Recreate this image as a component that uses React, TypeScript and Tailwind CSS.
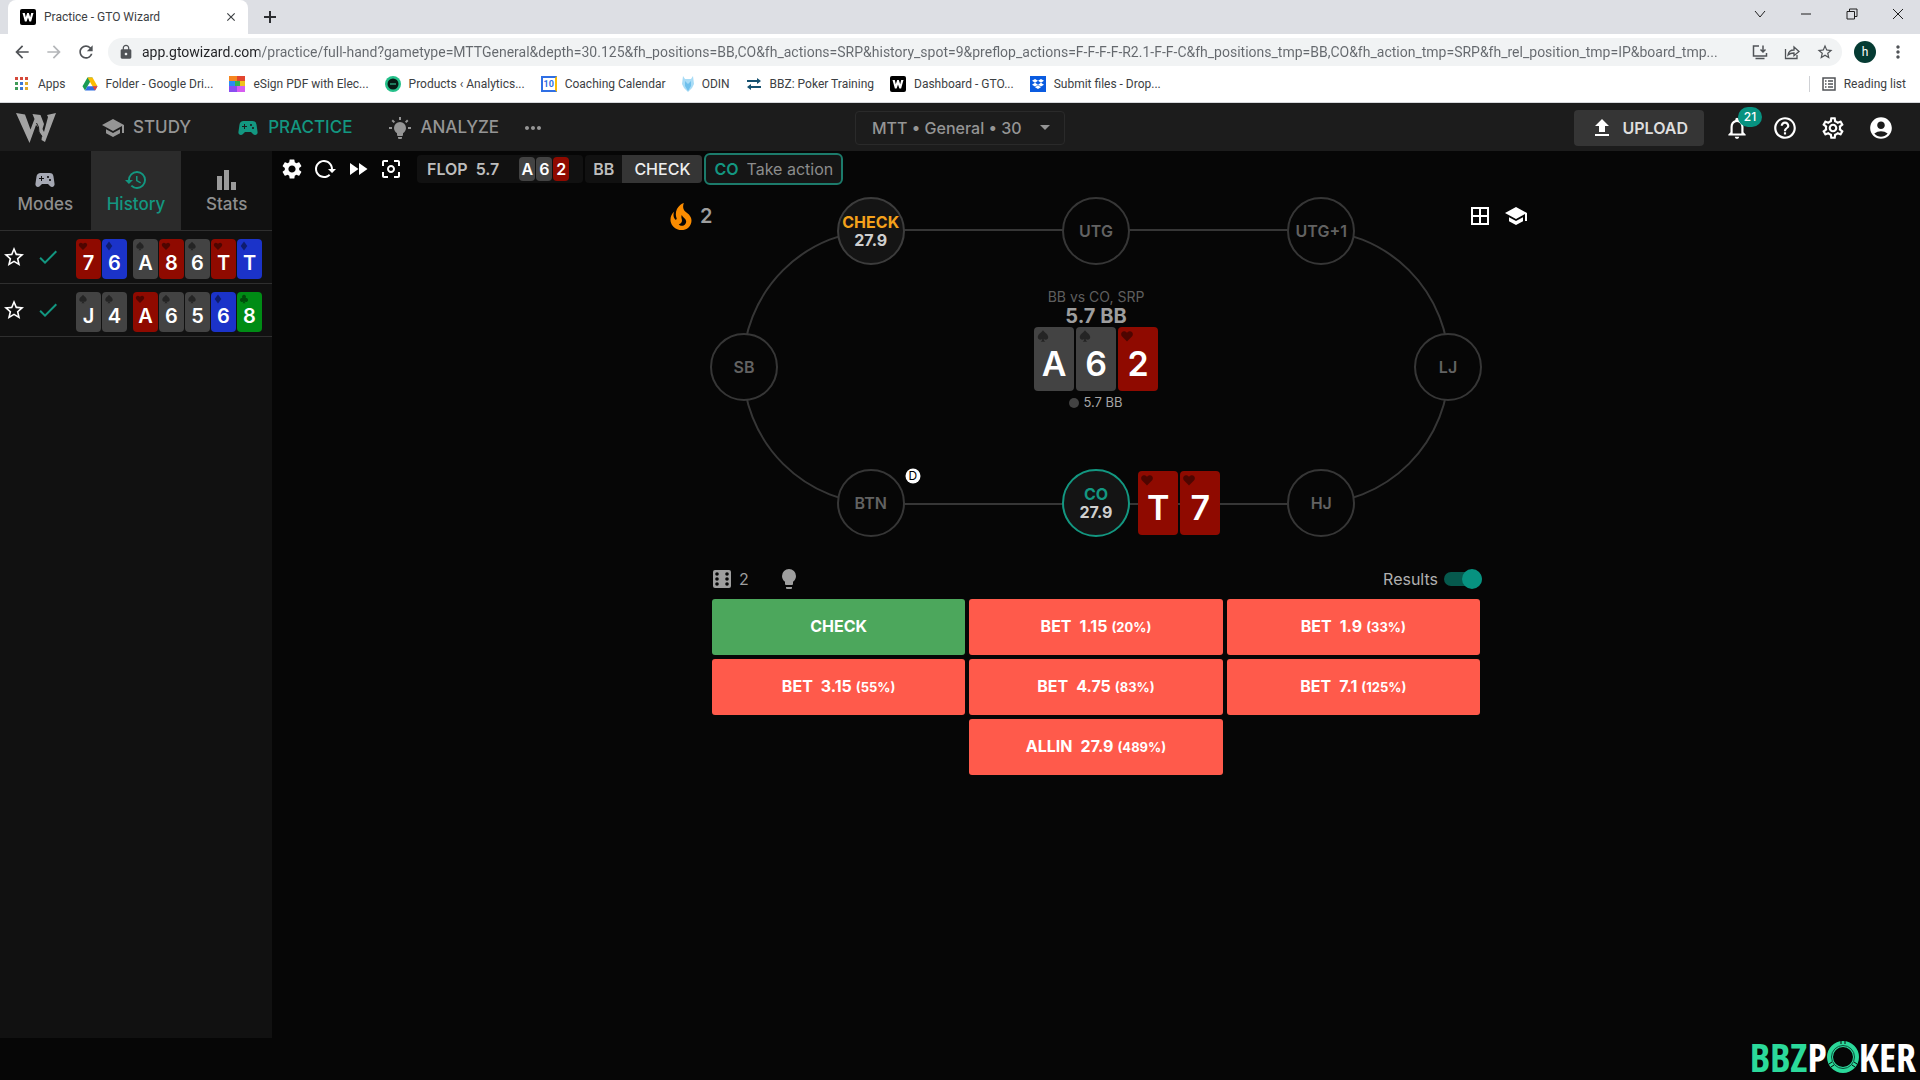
import type { ReactNode } from "react"
import {
  MdAccountCircle,
  MdArrowBack,
  MdArrowDropDown,
  MdArrowForward,
  MdBorderAll,
  MdCenterFocusWeak,
  MdCheck,
  MdClose,
  MdFastForward,
  MdHelpOutline,
  MdHistory,
  MdLock,
  MdMoreHoriz,
  MdMoreVert,
  MdNotificationsNone,
  MdOutlineSettings,
  MdRefresh,
  MdSchool,
  MdSettings,
  MdSportsEsports,
  MdStarBorder,
  MdUpload,
} from "react-icons/md"
import { FaDropbox } from "react-icons/fa"

type Suit = "s" | "h" | "d" | "c"

const suitColors: Record<Suit, string> = {
  s: "bg-[#434343]",
  h: "bg-[#8f0a00]",
  d: "bg-[#1b33c9]",
  c: "bg-[#008c15]",
}

const suitPaths: Record<Suit, string> = {
  s: "M12 2C9 6 3 9 3 14a4.5 4.5 0 0 0 7.6 3.2C10.400 19.500 9.500 21 8 22h8c-1.500-1-2.400-2.500-2.600-4.800A4.500 4.500 0 0 0 21 14c0-5-6-8-9-12z",
  h: "M12 21.500 3.500 13C-1 8 5 0 12 6.500 19 0 25 8 20.500 13z",
  d: "M12 1 20 12 12 23 4 12z",
  c: "M12 2a4.800 4.800 0 0 0-4 7.500 4.800 4.800 0 1 0 2.800 7.700C10.500 19.500 9.500 21 8 22h8c-1.500-1-2.500-2.500-2.800-4.800A4.800 4.800 0 1 0 16 9.500 4.800 4.800 0 0 0 12 2z",
}

const url =
  "app.gtowizard.com/practice/full-hand?gametype=MTTGeneral&depth=30.125&fh_positions=BB,CO&fh_actions=SRP&history_spot=9&preflop_actions=F-F-F-F-R2.1-F-F-C&fh_positions_tmp=BB,CO&fh_action_tmp=SRP&fh_rel_position_tmp=IP&board_tmp..."

const history = [
  { hand: ["7h", "6d"], board: ["As", "8h", "6s", "Th", "Td"] },
  { hand: ["Js", "4s"], board: ["Ah", "6s", "5s", "6d", "8c"] },
]

const seats = [
  { name: "BB", place: "left-[18%] top-0", action: "CHECK", stack: "27.9", ring: "border-[#3c3c3c]", label: "text-[#f5a21b]" },
  { name: "UTG", place: "left-1/2 top-0" },
  { name: "UTG+1", place: "left-[82%] top-0" },
  { name: "LJ", place: "left-full top-1/2" },
  { name: "HJ", place: "left-[82%] top-full" },
  { name: "CO", place: "left-1/2 top-full", action: "CO", stack: "27.9", ring: "border-[#139781]", label: "text-[#139781]" },
  { name: "BTN", place: "left-[18%] top-full" },
  { name: "SB", place: "left-0 top-1/2" },
]

const actions = [
  { label: "CHECK" },
  { label: "BET", size: "1.15", pct: "(20%)" },
  { label: "BET", size: "1.9", pct: "(33%)" },
  { label: "BET", size: "3.15", pct: "(55%)" },
  { label: "BET", size: "4.75", pct: "(83%)" },
  { label: "BET", size: "7.1", pct: "(125%)" },
  { label: "ALLIN", size: "27.9", pct: "(489%)" },
]

function PathIcon({ d, className, viewBox = "0 0 24 24" }: { d: string; className: string; viewBox?: string }) {
  return (
    <svg viewBox={viewBox} className={className} fill="currentColor" aria-hidden="true">
      <path d={d} />
    </svg>
  )
}

function WizardBadge() {
  return (
    <svg viewBox="0 0 16 16" className="size-4 shrink-0">
      <rect width="16" height="16" rx="2" fill="#000" />
      <path d="M2.500 4h2.300l1 4.200L7.200 4h1.600l1.400 4.200L11.200 4h2.300l-2.400 8.500H9.400L8 8.500l-1.400 4H4.900z" fill="#fff" />
    </svg>
  )
}

const bookmarks: { label: string; icon: ReactNode }[] = [
  {
    label: "Apps",
    icon: (
      <svg viewBox="0 0 16 16" className="size-4">
        {["#d5493a", "#d5493a", "#d5493a", "#3f9b57", "#3b78d8", "#e0a92c", "#3f9b57", "#3b78d8", "#e0a92c"].map((fill, i) => (
          <rect key={i} x={1 + (i % 3) * 5} y={1 + Math.floor(i / 3) * 5} width="3" height="3" fill={fill} />
        ))}
      </svg>
    ),
  },
  {
    label: "Folder - Google Dri...",
    icon: (
      <svg viewBox="0 0 16 16" className="size-4">
        <path d="M5.500 1.500h5L8 6 3 14.500.500 10.200z" fill="#1a9c55" />
        <path d="M5.500 1.500h5l5 8.700h-5z" fill="#fbbc04" />
        <path d="M5.500 10.200h10L13 14.500H3z" fill="#2f6fe4" />
        <path d="M10.500 10.200h5L13 14.500z" fill="#e94235" />
      </svg>
    ),
  },
  {
    label: "eSign PDF with Elec...",
    icon: (
      <svg viewBox="0 0 16 16" className="size-4">
        <rect width="8" height="6" fill="#f6861f" />
        <rect x="8" width="8" height="6" fill="#e2452f" />
        <rect y="5" width="6" height="5" fill="#2b8cf0" />
        <rect x="6" y="5" width="5" height="5" fill="#35b34a" />
        <rect x="11" y="5" width="5" height="5" fill="#f0c21b" />
        <rect y="10" width="8" height="6" fill="#8a4df0" />
        <rect x="8" y="10" width="8" height="6" fill="#d65cf0" />
      </svg>
    ),
  },
  {
    label: "Products ‹ Analytics...",
    icon: (
      <svg viewBox="0 0 16 16" className="size-4">
        <circle cx="8" cy="8" r="8" fill="#25c08a" />
        <circle cx="8" cy="8" r="5.500" fill="#071a14" />
        <rect x="5" y="7" width="6" height="2" fill="#1f7a5c" />
      </svg>
    ),
  },
  {
    label: "Coaching Calendar",
    icon: (
      <span className="flex size-4 items-center justify-center border-2 border-r-[#fbbc04] border-[#2f6fe4] bg-white text-[9px] font-bold text-[#2f6fe4]">
        10
      </span>
    ),
  },
  {
    label: "ODIN",
    icon: (
      <svg viewBox="0 0 12 16" className="h-4 w-3">
        <path d="M1 0l2 3h6l2-3 1 8-2 4-4 4-4-4-2-4z" fill="#a9dcf6" />
        <path d="M3 5l3 3 3-3v5l-3 5-3-5z" fill="#6fc0ec" />
      </svg>
    ),
  },
  {
    label: "BBZ: Poker Training",
    icon: (
      <svg viewBox="0 0 16 16" className="size-4" fill="#15506f">
        <path d="M1 4h10V2l4 3-4 3V6H1zM15 12H5v2l-4-3 4-3v2h10z" />
      </svg>
    ),
  },
  { label: "Dashboard - GTO...", icon: <WizardBadge /> },
  {
    label: "Submit files - Drop...",
    icon: (
      <span className="flex size-4 items-center justify-center bg-[#0a5be0] text-white">
        <FaDropbox className="size-3" />
      </span>
    ),
  },
]

function PlayingCard({ card, large = false }: { card: string; large?: boolean }) {
  const suit = card[1] as Suit
  return (
    <div
      className={`relative flex items-center justify-center font-semibold text-white ${suitColors[suit]} ${
        large ? "h-16 w-10 rounded-[4px] pt-2 text-[34px]" : "h-10 w-[25px] rounded-[4px] pt-2 text-xl"
      }`}
    >
      <PathIcon
        d={suitPaths[suit]}
        className={`absolute text-black/45 ${large ? "left-0.5 top-0.5 size-3.5" : "left-0.5 top-0.5 size-2.5"}`}
      />
      {card[0]}
    </div>
  )
}

function BrowserChrome() {
  return (
    <div className="bg-white font-['Roboto',sans-serif] text-xs text-[#3c4043]">
      <div className="flex h-[34px] items-center bg-[#dddfe4] pl-2 pr-4">
        <div className="flex h-[34px] w-60 items-center gap-2 rounded-t-lg bg-white pl-3 pr-2.5">
          <WizardBadge />
          <span className="flex-1">Practice - GTO Wizard</span>
          <button aria-label="Close tab">
            <MdClose className="size-3.5" />
          </button>
        </div>
        <button aria-label="New tab" className="ml-3.5">
          <svg viewBox="0 0 16 16" className="size-4" stroke="#2b2d30" strokeWidth="2">
            <path d="M8 2v12M2 8h12" />
          </svg>
        </button>
        <div className="ml-auto flex items-center gap-[34px] pb-1.5">
          {[
            ["Search tabs", "M1 3l5 6 5-6"],
            ["Minimize", "M1 6h10"],
            ["Restore", "M1 3.500h7.500V11H1zM3.500 3.500V1H11v7.500H8.500"],
            ["Close", "M1 1l10 10M11 1L1 11"],
          ].map(([label, d]) => (
            <button key={label} aria-label={label}>
              <svg viewBox="0 0 12 12" className="size-3" fill="none" stroke="#1f1f1f">
                <path d={d} />
              </svg>
            </button>
          ))}
        </div>
      </div>

      <div className="flex h-9 items-center pl-3 pr-3">
        <div className="flex items-center gap-3 text-[#505357]">
          <button aria-label="Back"><MdArrowBack className="size-5" /></button>
          <button aria-label="Forward" className="text-[#b4b6b9]"><MdArrowForward className="size-5" /></button>
          <button aria-label="Reload"><MdRefresh className="size-5" /></button>
        </div>
        <div className="ml-3 flex h-7 flex-1 items-center rounded-full bg-[#f1f3f4] pl-2.5 pr-2 text-[#505357]">
          <MdLock className="size-4" />
          <input
            aria-label="Address"
            readOnly
            value={url}
            className="ml-2 min-w-0 flex-1 bg-[linear-gradient(to_right,#202124_117px,#64686d_117px)] bg-clip-text text-sm text-transparent outline-none"
          />
          <div className="ml-3 flex items-center gap-4">
            <button aria-label="Install">
              <svg viewBox="0 0 16 16" className="size-4" fill="none" stroke="currentColor" strokeWidth="1.500">
                <path d="M7 2H1.500v10h13V9M3.500 14.500h9M11 1.500V8M8.500 5.500 11 8l2.500-2.500" />
              </svg>
            </button>
            <button aria-label="Share">
              <svg viewBox="0 0 16 16" className="size-4" fill="none" stroke="currentColor" strokeWidth="1.300">
                <path d="M1.500 5v9.500H13V11M4 11c.5-3.500 2.500-5 6-5V3l5 4.500-5 4.200V9C7.500 9 5.500 9.500 4 11z" />
              </svg>
            </button>
            <button aria-label="Bookmark"><MdStarBorder className="size-[18px]" /></button>
          </div>
        </div>
        <span className="ml-3 flex size-[22px] items-center justify-center rounded-full bg-[#053b33] text-white">h</span>
        <button aria-label="Menu" className="ml-3 text-[#505357]"><MdMoreVert className="size-5" /></button>
      </div>

      <div className="flex h-[33px] items-center border-b border-[#d6d8dc] pb-1 pl-3.5 pr-3.5">
        <nav className="flex items-center gap-4">
          {bookmarks.map((b) => (
            <a key={b.label} href="#" className="flex items-center gap-2 whitespace-nowrap">
              {b.icon}
              {b.label}
            </a>
          ))}
        </nav>
        <button className="ml-auto flex h-4 items-center gap-2 border-l border-[#cfd1d5] pl-3">
          <svg viewBox="0 0 14 14" className="size-3.5" fill="none" stroke="#505357" strokeWidth="1.500">
            <path d="M1 1h12v12H1zM3 4h1.500M6 4h5M3 7h1.500M6 7h5M3 10h1.500M6 10h5" />
          </svg>
          Reading list
        </button>
      </div>
    </div>
  )
}

function Header() {
  return (
    <header className="grid h-12 grid-cols-[1fr_auto_1fr] items-center bg-[#1c1c1c] pt-0.5 text-[17px] font-medium text-[#959595]">
      <div className="flex items-center pl-4">
        <svg viewBox="0 0 40 30" className="h-[30px] w-10" fill="#a3a3a3" aria-label="GTO Wizard">
          <path d="M0 0l9 1.500 5.500 15L18.500 6 16.500 1l8 1 3.500 9-1.500 5 1.500 3L32 4l-1-2 9-2-11 29-3.500-2 .5-4-3-3.500-.5-5L20 12l-6.500 18z" />
          <path d="M20.500 10l2 4 .5 5 3 4.500" fill="none" stroke="#1c1c1c" strokeWidth="1" />
        </svg>
        <nav className="ml-[45px] flex items-center">
          <a href="#" className="flex items-center gap-2">
            <MdSchool className="size-6" />
            STUDY
          </a>
          <a href="#" className="ml-[45px] flex items-center gap-2 text-[#139781]">
            <MdSportsEsports className="size-6" />
            PRACTICE
          </a>
          <a href="#" className="ml-9 flex items-center gap-2">
            <PathIcon
              className="size-6"
              d="M12,6A6,6 0 0,1 18,12C18,14.22 16.79,16.16 15,17.2V19A1,1 0 0,1 14,20H10A1,1 0 0,1 9,19V17.2C7.21,16.16 6,14.22 6,12A6,6 0 0,1 12,6M14,21V22A1,1 0 0,1 13,23H11A1,1 0 0,1 10,22V21H14M20,11H23V13H20V11M1,11H4V13H1V11M13,1V4H11V1H13M4.92,3.5L7.05,5.64L5.63,7.05L3.5,4.93L4.92,3.5M16.95,5.63L19.07,3.5L20.5,4.93L18.37,7.05L16.95,5.63Z"
            />
            ANALYZE
          </a>
          <button aria-label="More" className="ml-[22px]">
            <MdMoreHoriz className="size-6" />
          </button>
        </nav>
      </div>

      <div className="relative">
        <select
          aria-label="Game type"
          className="h-[34px] w-[210px] appearance-none rounded border border-[#2a2a2a] bg-[#1c1c1c] pl-4 text-base"
        >
          <option>MTT • General • 30</option>
        </select>
        <MdArrowDropDown className="pointer-events-none absolute right-2 top-1 size-6" />
      </div>

      <div className="flex items-center justify-end pr-[26px] text-white">
        <button className="flex h-9 items-center gap-2 rounded bg-[#353535] px-4 text-base font-semibold text-[#dedede]">
          <MdUpload className="size-6 text-white" />
          UPLOAD
        </button>
        <button aria-label="Notifications" className="relative ml-5">
          <MdNotificationsNone className="size-[26px]" />
          <span className="absolute -right-3 -top-2 flex h-5 w-6 items-center justify-center rounded-full bg-[#079280] text-xs font-medium">
            21
          </span>
        </button>
        <button aria-label="Help" className="ml-[22px]"><MdHelpOutline className="size-[26px]" /></button>
        <button aria-label="Settings" className="ml-[22px]"><MdOutlineSettings className="size-[26px]" /></button>
        <button aria-label="Account" className="ml-[22px]"><MdAccountCircle className="size-[26px]" /></button>
      </div>
    </header>
  )
}

function Sidebar() {
  return (
    <aside className="w-[272px] shrink-0 bg-[#111111]">
      <div className="grid h-20 grid-cols-3 border-b border-[#2f2f2f] text-[17px] font-medium text-[#8e8e8e]">
        <button className="flex flex-col items-center justify-center pt-1">
          <MdSportsEsports className="size-6 text-[#a5a8b3]" />
          Modes
        </button>
        <button className="flex flex-col items-center justify-center bg-[#2b2b2b] pt-1 text-[#139781]">
          <MdHistory className="size-6" />
          History
        </button>
        <button className="flex flex-col items-center justify-center pt-1">
          <svg viewBox="0 0 24 24" className="size-6" fill="#9b9b9b">
            <path d="M2 8h5v14H2zM9 2h5v20H9zM16 14h5v8h-5z" />
          </svg>
          Stats
        </button>
      </div>
      {history.map((row) => (
        <div key={row.hand.join("")} className="flex h-[53px] items-center border-b border-[#2f2f2f] pl-0.5">
          <button aria-label="Favorite" className="text-white"><MdStarBorder className="size-6" /></button>
          <MdCheck className="ml-2.5 size-6 text-[#139781]" />
          <div className="ml-4 mt-1 flex gap-px">
            {row.hand.map((card) => <PlayingCard key={card} card={card} />)}
          </div>
          <div className="ml-1.5 mt-1 flex gap-px">
            {row.board.map((card) => <PlayingCard key={card} card={card} />)}
          </div>
        </div>
      ))}
    </aside>
  )
}

function HandBar() {
  return (
    <div className="flex h-9 items-center text-[#bdbdbd]">
      <div className="flex items-center gap-[9px] pl-2 text-white">
        <button aria-label="Settings"><MdSettings className="size-6" /></button>
        <button aria-label="Restart">
          <PathIcon
            className="size-6"
            d="M2 12C2 16.97 6.03 21 11 21C13.39 21 15.68 20.06 17.4 18.4L15.9 16.9C14.63 18.25 12.86 19 11 19C4.76 19 1.64 11.46 6.05 7.05C10.46 2.64 18 5.77 18 12H15L19 16H19.1L23 12H20C20 7.03 15.97 3 11 3C6.03 3 2 7.03 2 12Z"
          />
        </button>
        <button aria-label="Next hand"><MdFastForward className="size-6" /></button>
        <button aria-label="Focus"><MdCenterFocusWeak className="size-6" /></button>
      </div>
      <div className="ml-3.5 flex h-7 items-center gap-2 rounded bg-[#111111] pl-2.5 pr-3.5 font-semibold">
        <span>FLOP</span>
        <span>5.7</span>
        <div className="ml-3 flex gap-px text-white">
          <span className="flex h-6 w-4 items-center justify-center rounded-sm bg-[#434343]">A</span>
          <span className="flex h-6 w-4 items-center justify-center rounded-sm bg-[#434343]">6</span>
          <span className="flex h-6 w-4 items-center justify-center rounded-sm bg-[#8f0a00]">2</span>
        </div>
      </div>
      <div className="ml-0.5 flex h-7 items-center overflow-hidden rounded bg-[#111111] font-semibold">
        <span className="px-2">BB</span>
        <button className="h-full bg-[#353535] px-3 font-medium text-[#eeeeee]">CHECK</button>
      </div>
      <button className="ml-0.5 flex h-8 items-center gap-2 rounded-md border-2 border-[#1c7b6b] bg-[#151515] px-2">
        <span className="font-semibold text-[#139781]">CO</span>
        <span className="text-[#8c8c8c]">Take action</span>
      </button>
    </div>
  )
}

function PokerTable() {
  return (
    <div className="mx-auto w-full max-w-[864px] pt-4">
      <div className="flex h-[26px] items-center justify-between text-white">
        <div className="flex items-center gap-2 pl-1.5 text-xl font-semibold text-[#9e9e9e]">
          <PathIcon
            viewBox="5 3 14 18"
            className="h-[27px] w-[22px] text-[#fb8c00]"
            d="M17.66 11.2C17.43 10.9 17.15 10.64 16.89 10.38C16.22 9.78 15.46 9.35 14.82 8.72C13.33 7.26 13 4.85 13.95 3C13 3.23 12.17 3.75 11.46 4.32C8.87 6.4 7.85 10.07 9.07 13.22C9.11 13.32 9.15 13.42 9.15 13.55C9.15 13.77 9 13.97 8.8 14.05C8.57 14.15 8.33 14.09 8.14 13.93C8.08 13.88 8.04 13.83 8 13.76C6.87 12.33 6.69 10.28 7.45 8.64C5.78 10 4.87 12.3 5 14.47C5.06 14.97 5.12 15.47 5.29 15.97C5.43 16.57 5.7 17.17 6 17.7C7.08 19.43 8.95 20.67 10.96 20.92C13.1 21.19 15.39 20.8 17.03 19.32C18.86 17.66 19.5 15 18.56 12.72L18.43 12.46C18.22 12 17.66 11.2 17.66 11.2M14.5 17.5C14.22 17.74 13.76 18 13.4 18.1C12.28 18.5 11.16 17.94 10.5 17.28C11.69 17 12.4 16.12 12.61 15.23C12.78 14.43 12.46 13.77 12.33 13C12.21 12.26 12.23 11.63 12.5 10.94C12.69 11.32 12.89 11.7 13.13 12C13.9 13 15.11 13.44 15.37 14.8C15.41 14.94 15.43 15.08 15.43 15.23C15.46 16.05 15.1 16.95 14.5 17.5Z"
          />
          2
        </div>
        <div className="flex items-center gap-3">
          <button aria-label="Tables"><MdBorderAll className="size-6" /></button>
          <button aria-label="Study this spot"><MdSchool className="size-6" /></button>
        </div>
      </div>

      <div className="relative mx-auto flex h-[276px] w-[708px] flex-col items-center rounded-full border-2 border-[#363636] pt-14">
        <p className="text-sm text-[#5e5e5e]">BB vs CO, SRP</p>
        <p className="text-xl leading-[18px] font-bold text-[#9e9e9e]">5.7 BB</p>
        <div className="mt-0.5 flex gap-0.5">
          <PlayingCard card="As" large />
          <PlayingCard card="6s" large />
          <PlayingCard card="2h" large />
        </div>
        <p className="mt-0.5 flex items-center gap-1 text-[13px] text-[#a5a5a5]">
          <span className="size-2.5 rounded-full bg-[#434343]" />
          5.7 BB
        </p>

        {seats.map((seat) => (
          <div
            key={seat.name}
            className={`absolute flex size-[68px] -translate-x-1/2 -translate-y-1/2 flex-col items-center justify-center rounded-full border-2 text-base leading-[18px] ${seat.place} ${
              seat.stack ? `bg-[#141414] font-bold ${seat.ring}` : "border-[#363636] bg-[#060606] font-semibold text-[#626262]"
            }`}
          >
            {seat.stack ? (
              <>
                <span className={seat.label}>{seat.action}</span>
                <span className="text-[#cfcfcf]">{seat.stack}</span>
              </>
            ) : (
              seat.name
            )}
          </div>
        ))}
        <div className="absolute left-[56%] top-full flex -translate-y-1/2 gap-0.5">
          <PlayingCard card="Th" large />
          <PlayingCard card="7h" large />
        </div>
        <span className="absolute left-[24%] top-[90%] flex size-[15px] -translate-x-1/2 -translate-y-1/2 items-center justify-center rounded-full bg-white text-xs text-black">
          D
        </span>
      </div>
    </div>
  )
}

function ActionPanel() {
  return (
    <section className="mx-auto mt-[62px] w-full max-w-[768px]">
      <div className="flex h-6 items-center text-base text-[#9e9e9e]">
        <svg viewBox="0 0 18 18" className="ml-px size-[18px]">
          <rect width="18" height="18" rx="2" fill="#9e9e9e" />
          {[4, 9, 14].map((y) => (
            <g key={y} fill="#060606">
              <circle cx="4" cy={y} r="1.800" />
              <circle cx="14" cy={y} r="1.800" />
            </g>
          ))}
        </svg>
        <span className="ml-2">2</span>
        <button aria-label="Hint" className="ml-7">
          <PathIcon
            className="size-6"
            d="M12,2A7,7 0 0,0 5,9C5,11.38 6.19,13.47 8,14.74V17A1,1 0 0,0 9,18H15A1,1 0 0,0 16,17V14.74C17.81,13.47 19,11.38 19,9A7,7 0 0,0 12,2M9,21A1,1 0 0,0 10,22H14A1,1 0 0,0 15,21V20H9V21Z"
          />
        </button>
        <label className="-mr-0.5 ml-auto flex items-center gap-1.5 text-[#b0b0b0]">
          Results
          <input
            type="checkbox"
            defaultChecked
            className="flex h-3.5 w-[38px] appearance-none items-center justify-end rounded-full bg-[#06594d] before:size-5 before:shrink-0 before:rounded-full before:bg-[#079280]"
          />
        </label>
      </div>
      <div className="mt-2 grid grid-cols-3 gap-1">
        {actions.map((a) => (
          <button
            key={a.label + a.size}
            className={`flex h-14 items-center justify-center rounded-[3px] pb-0.5 text-base font-bold text-white ${
              a.label === "CHECK" ? "bg-[#4ca75c]" : "bg-[#ff5a4b]"
            } ${a.label === "ALLIN" ? "col-start-2" : ""}`}
          >
            <span className="flex items-baseline">
              {a.label}
              {a.size && <span className="ml-2">{a.size}</span>}
              {a.pct && <span className="ml-1 text-[13px]">{a.pct}</span>}
            </span>
          </button>
        ))}
      </div>
    </section>
  )
}

export default function App() {
  return (
    <div className="flex min-h-screen flex-col bg-[#060606] font-['Inter','Liberation_Sans',sans-serif]">
      <BrowserChrome />
      <Header />
      <div className="flex flex-1">
        <Sidebar />
        <main className="min-w-0 flex-1">
          <HandBar />
          <PokerTable />
          <ActionPanel />
        </main>
      </div>
      <footer className="flex h-[42px] items-center justify-end pr-1 pb-1 font-['Open_Sans_Condensed','Open_Sans',sans-serif] text-[40px] leading-none font-bold">
        <span className="text-[#2bd99a]">BBZ</span>
        <span className="text-white">P</span>
        <svg viewBox="0 0 32 32" className="size-8" fill="none" aria-label="O">
          <circle cx="16" cy="16" r="13" stroke="#2bd99a" strokeWidth="6" />
          <circle cx="16" cy="16" r="11.500" stroke="#0b4a38" strokeWidth="1" />
          <path d="M14 0v3M18 0v3M2 23l3-2M4 26l3-2M30 23l-3-2M28 26l-3-2" stroke="#060606" strokeWidth="1" />
        </svg>
        <span className="text-white">KER</span>
      </footer>
    </div>
  )
}
